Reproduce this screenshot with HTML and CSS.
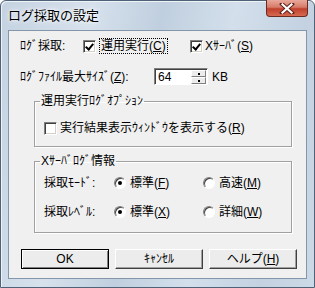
FILE: index.html
```html
<!DOCTYPE html>
<html lang="ja">
<head>
    <meta charset="UTF-8">
    <title>ログ採取の設定</title>
    <link rel="stylesheet" href="styles.css">
</head>
<body>

<div class="window">
    <!-- Title bar -->
    <div class="titlebar">
        <span class="title">ログ採取の設定</span>
        <span class="close-btn">
            <svg width="16" height="11" viewBox="0 0 16 11">
                <path d="M3 1 L13 10 M13 1 L3 10" stroke="#5a2018" stroke-width="4" stroke-linecap="square"/>
                <path d="M3.5 1.5 L12.5 9.5 M12.5 1.5 L3.5 9.5" stroke="#fff" stroke-width="2.2" stroke-linecap="square"/>
            </svg>
        </span>
    </div>

    <!-- Dialog content -->
    <div class="client">
        <div class="row row-log">
            <span class="label label-log">ﾛｸﾞ採取:</span>
            <span class="check checked"></span>
            <span class="opt opt-run"><span class="focus">運用実行(<u>C</u>)</span></span>
            <span class="check checked"></span>
            <span class="opt opt-x">Xｻｰﾊﾞ(<u>S</u>)</span>
        </div>

        <div class="row row-size">
            <span class="label label-size">ﾛｸﾞﾌｧｲﾙ最大ｻｲｽﾞ(<u>Z</u>):</span>
            <span class="edit">64</span>
            <span class="spin">
                <span class="spin-btn spin-up"></span>
                <span class="spin-btn spin-down"></span>
            </span>
            <span class="unit">KB</span>
        </div>

        <fieldset class="group group-run">
            <legend>運用実行ﾛｸﾞｵﾌﾟｼｮﾝ</legend>
            <div class="row row-inner">
                <span class="check"></span>
                <span class="opt opt-window">実行結果表示ｳｨﾝﾄﾞｳを表示する(<u>R</u>)</span>
            </div>
        </fieldset>

        <fieldset class="group group-x">
            <legend>Xｻｰﾊﾞﾛｸﾞ情報</legend>
            <div class="radio-grid">
                <span class="radio-label">採取ﾓｰﾄﾞ:</span>
                <span class="radio-opt"><span class="radio checked"></span><span>標準(<u>F</u>)</span></span>
                <span class="radio-opt"><span class="radio"></span><span>高速(<u>M</u>)</span></span>

                <span class="radio-label">採取ﾚﾍﾞﾙ:</span>
                <span class="radio-opt"><span class="radio checked"></span><span>標準(<u>X</u>)</span></span>
                <span class="radio-opt"><span class="radio"></span><span>詳細(<u>W</u>)</span></span>
            </div>
        </fieldset>

        <div class="buttons">
            <span class="btn btn-default">OK</span>
            <span class="btn">ｷｬﾝｾﾙ</span>
            <span class="btn"><span>ヘルプ(<u>H</u>)</span></span>
        </div>
    </div>
</div>

</body>
</html>
```

FILE: styles.css
```css
body {
    margin: 0;
    padding: 0;
    background-color: #ffffff;
    font-family: "Liberation Sans", "Noto Sans CJK JP", sans-serif;
    font-size: 12px;
    line-height: 14px;
    color: #000;
}

u {
    text-decoration: underline;
    text-underline-offset: 1px;
}

/* Vista style window frame */
.window {
    width: 315px;
    height: 288px;
    box-sizing: border-box;
    display: flex;
    flex-direction: column;
    padding: 0 7px 8px 7px;
    border: 1px solid #4f6277;
    border-radius: 6px 6px 0 0;
    background: linear-gradient(100deg, #c4d2e1 0%, #d6e1ec 25%, #c0cfdf 45%, #d3dfeb 65%, #c3d1e1 85%, #ccd9e6 100%);
    box-shadow: inset 1px 1px 0 #eef3f8;
}

.titlebar {
    height: 29px;
    display: flex;
    justify-content: space-between;
    align-items: flex-start;
}

.title {
    margin-top: 7px;
    font-size: 13px;
    line-height: 15px;
    text-shadow: 0 0 6px #fff, 0 0 3px #fff;
}

.close-btn {
    width: 42px;
    height: 17px;
    margin-top: -1px;
    margin-right: -1px;
    box-sizing: border-box;
    border: 1px solid #6b2a22;
    border-top: none;
    border-radius: 0 0 4px 4px;
    background: linear-gradient(#e8a99c 0%, #d77a68 45%, #c0402c 55%, #d66a50 100%);
    display: flex;
    justify-content: center;
    align-items: center;
}

.client {
    flex: 1;
    background-color: #f0f0f0;
    border: 1px solid #8496aa;
    padding: 0 0 0 11px;
}

.row {
    display: flex;
    align-items: center;
    height: 16px;
}

.row-log {
    margin-top: 7px;
}

.label-log {
    width: 63px;
}

/* Classic checkbox */
.check {
    width: 13px;
    height: 13px;
    box-sizing: border-box;
    border-top: 1px solid #808080;
    border-left: 1px solid #808080;
    border-bottom: 1px solid #ffffff;
    border-right: 1px solid #ffffff;
    box-shadow: inset 1px 1px 0 #404040, inset -1px -1px 0 #d4d0c8;
    background-color: #ffffff;
    position: relative;
    flex-shrink: 0;
}

.check.checked::after {
    content: "";
    position: absolute;
    left: 3px;
    top: 1px;
    width: 3px;
    height: 6px;
    border-right: 2px solid #000;
    border-bottom: 2px solid #000;
    transform: rotate(40deg);
}

.opt-run {
    margin-left: 4px;
    width: 90px;
}

.focus {
    outline: 1px dotted #000;
    outline-offset: 0;
    padding: 0 1px;
}

.opt-x {
    margin-left: 2px;
}

.row-size {
    margin-top: 14px;
    height: 17px;
}

.label-size {
    width: 134px;
}

/* Edit box with spinner */
.edit {
    width: 37px;
    height: 17px;
    box-sizing: border-box;
    background-color: #fff;
    border-top: 1px solid #808080;
    border-left: 1px solid #808080;
    border-bottom: 1px solid #ffffff;
    box-shadow: inset 1px 1px 0 #404040;
    padding: 1px 0 0 3px;
}

.spin {
    width: 17px;
    height: 17px;
    box-sizing: border-box;
    background-color: #fff;
    border-top: 1px solid #808080;
    border-right: 1px solid #ffffff;
    border-bottom: 1px solid #ffffff;
    box-shadow: inset 0 1px 0 #404040;
    padding: 1px 1px 0 0;
    display: flex;
    flex-direction: column;
}

.spin-btn {
    flex: 1;
    background-color: #ececec;
    border-top: 1px solid #ffffff;
    border-left: 1px solid #ffffff;
    border-right: 1px solid #808080;
    border-bottom: 1px solid #808080;
    position: relative;
}

.spin-btn::after {
    content: "";
    position: absolute;
    left: 6px;
    top: 2px;
    width: 2px;
    height: 2px;
    background-color: #000;
}

.unit {
    margin-left: 4px;
}

/* Group boxes */
.group {
    margin: 9px 14px 0 14px;
    padding: 0 0 0 5px;
    border: 1px solid #a0a0a0;
    box-shadow: inset 1px 1px 0 #ffffff, 1px 1px 0 #ffffff;
    min-width: 0;
}

.group legend {
    padding: 0 1px;
    line-height: 14px;
}

.group-run {
    padding-bottom: 10px;
}

.row-inner {
    margin: 12px 0 0 4px;
}

.opt-window {
    margin-left: 3px;
}

.group-x {
    margin-top: 7px;
    padding-bottom: 12px;
}

.radio-grid {
    margin: 7px 0 0 4px;
    display: grid;
    grid-template-columns: 70px 89px auto;
    grid-auto-rows: 16px;
    row-gap: 13px;
    align-items: center;
}

.radio-opt {
    display: flex;
    align-items: center;
    gap: 4px;
}

/* Classic radio button */
.radio {
    width: 12px;
    height: 12px;
    box-sizing: border-box;
    border-radius: 50%;
    border-top: 1px solid #808080;
    border-left: 1px solid #808080;
    border-bottom: 1px solid #ffffff;
    border-right: 1px solid #ffffff;
    box-shadow: inset 1px 1px 0 #404040;
    background-color: #ffffff;
    position: relative;
}

.radio.checked::after {
    content: "";
    position: absolute;
    left: 3px;
    top: 3px;
    width: 4px;
    height: 4px;
    border-radius: 50%;
    background-color: #000;
}

/* Push buttons */
.buttons {
    display: flex;
    gap: 6px;
    margin: 16px 0 0 1px;
}

.btn {
    width: 88px;
    height: 20px;
    box-sizing: border-box;
    background-color: #ececec;
    border-top: 1px solid #ffffff;
    border-left: 1px solid #ffffff;
    border-right: 1px solid #404040;
    border-bottom: 1px solid #404040;
    box-shadow: inset -1px -1px 0 #a0a0a0;
    display: flex;
    justify-content: center;
    align-items: center;
}

.btn-default {
    border: 1px solid #000;
    box-shadow: inset 1px 1px 0 #ffffff, inset -1px -1px 0 #808080;
}
```
